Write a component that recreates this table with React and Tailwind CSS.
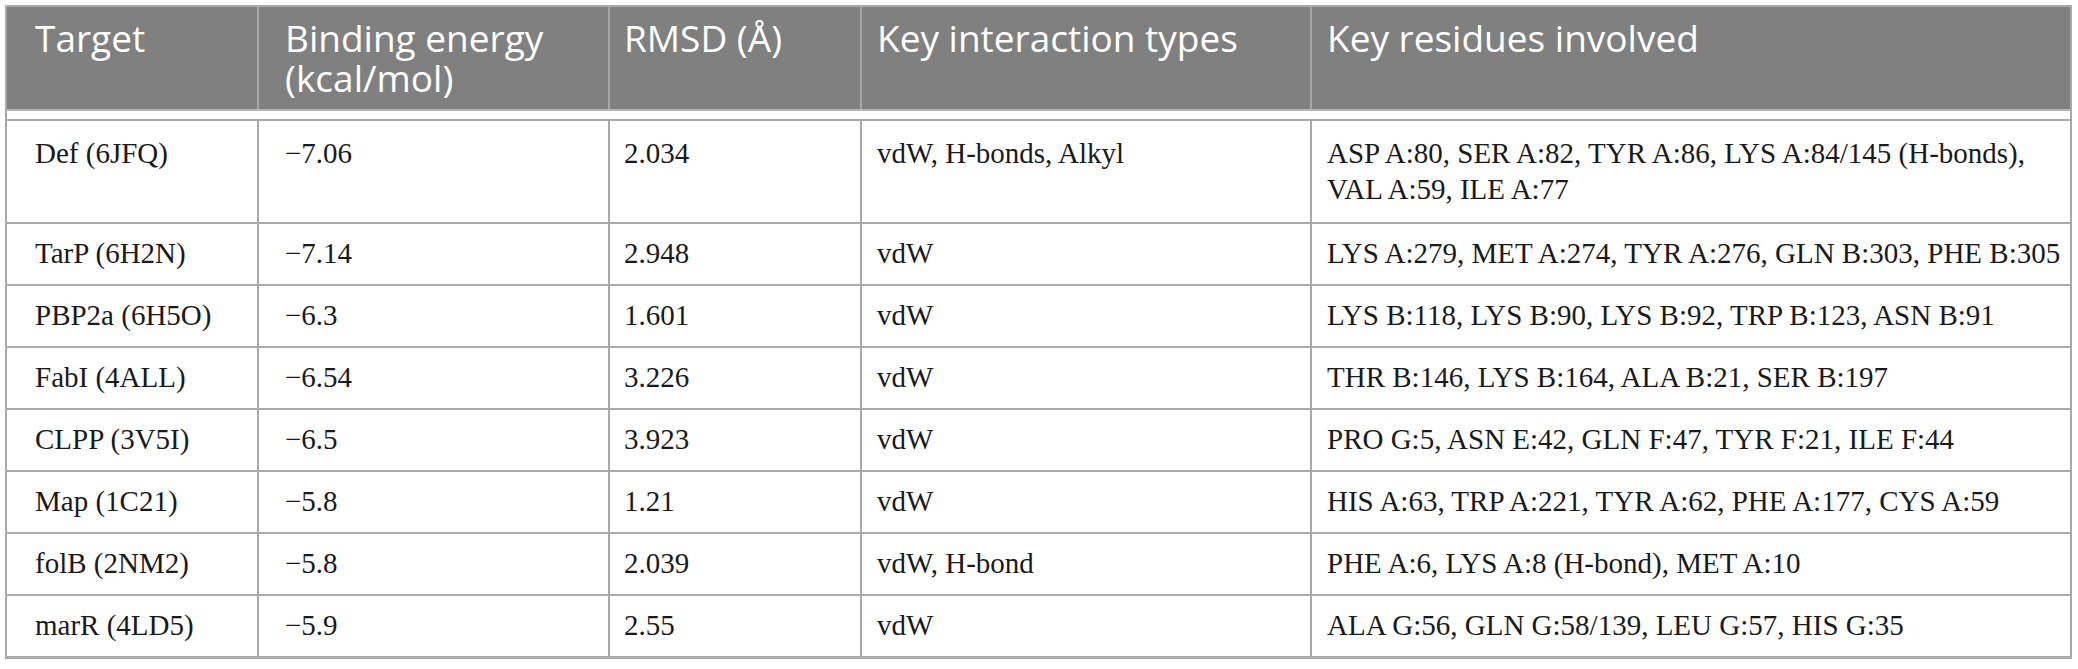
import React from 'react';

const head = [
  'Target',
  'Binding energy (kcal/mol)',
  'RMSD (Å)',
  'Key interaction types',
  'Key residues involved',
];

const rows = [
  ['Def (6JFQ)', '−7.06', '2.034', 'vdW, H-bonds, Alkyl', ['ASP A:80, SER A:82, TYR A:86, LYS A:84/145 (H-bonds),', 'VAL A:59, ILE A:77']],
  ['TarP (6H2N)', '−7.14', '2.948', 'vdW', 'LYS A:279, MET A:274, TYR A:276, GLN B:303, PHE B:305'],
  ['PBP2a (6H5O)', '−6.3', '1.601', 'vdW', 'LYS B:118, LYS B:90, LYS B:92, TRP B:123, ASN B:91'],
  ['FabI (4ALL)', '−6.54', '3.226', 'vdW', 'THR B:146, LYS B:164, ALA B:21, SER B:197'],
  ['CLPP (3V5I)', '−6.5', '3.923', 'vdW', 'PRO G:5, ASN E:42, GLN F:47, TYR F:21, ILE F:44'],
  ['Map (1C21)', '−5.8', '1.21', 'vdW', 'HIS A:63, TRP A:221, TYR A:62, PHE A:177, CYS A:59'],
  ['folB (2NM2)', '−5.8', '2.039', 'vdW, H-bond', 'PHE A:6, LYS A:8 (H-bond), MET A:10'],
  ['marR (4LD5)', '−5.9', '2.55', 'vdW', 'ALA G:56, GLN G:58/139, LEU G:57, HIS G:35'],
];

// column widths incl. left separator, and left padding per column
const cols = [
  'w-[250px] pl-[28px]',
  'w-[351px] border-l-2 pl-[26px]',
  'w-[252px] border-l-2 pl-[14px]',
  'w-[450px] border-l-2 pl-[15px]',
  'flex-1 border-l-2 pl-[15px]',
];

export default function App() {
  return (
    <div className="min-h-screen bg-white pt-[5px] pl-[5px]">
      <div className="w-[2067px] border-2 border-b-[3px] border-[#a9a9a9]">
        <div className="flex h-[102px] bg-[#808080] text-white text-[37px] leading-[40px]" style={{ fontFamily: '"Open Sans", sans-serif' }}>
          {head.map((h, i) => (
            <div key={i} className={`${cols[i]} border-[#a6a6a6] pt-[11px] ${i === 1 ? 'pr-[30px]' : ''}`}>
              {h}
            </div>
          ))}
        </div>
        <div className="h-[10px] border-t-2 border-[#b4b4b4]" />
        {rows.map((r, ri) => (
          <div
            key={ri}
            className={`flex border-t-2 border-[#a9a9a9] text-[29px] leading-[36px] text-[#1a1a1a] ${ri === 0 ? 'h-[103px]' : 'h-[62px]'}`}
            style={{ fontFamily: '"Liberation Serif", serif' }}
          >
            {r.map((c, ci) => (
              <div key={ci} className={`${cols[ci]} whitespace-nowrap border-[#a9a9a9] ${ri === 0 ? 'pt-[14px]' : 'pt-[11px]'}`}>
                {Array.isArray(c) ? c.map((l, li) => <div key={li}>{l}</div>) : c}
              </div>
            ))}
          </div>
        ))}
      </div>
    </div>
  );
}
